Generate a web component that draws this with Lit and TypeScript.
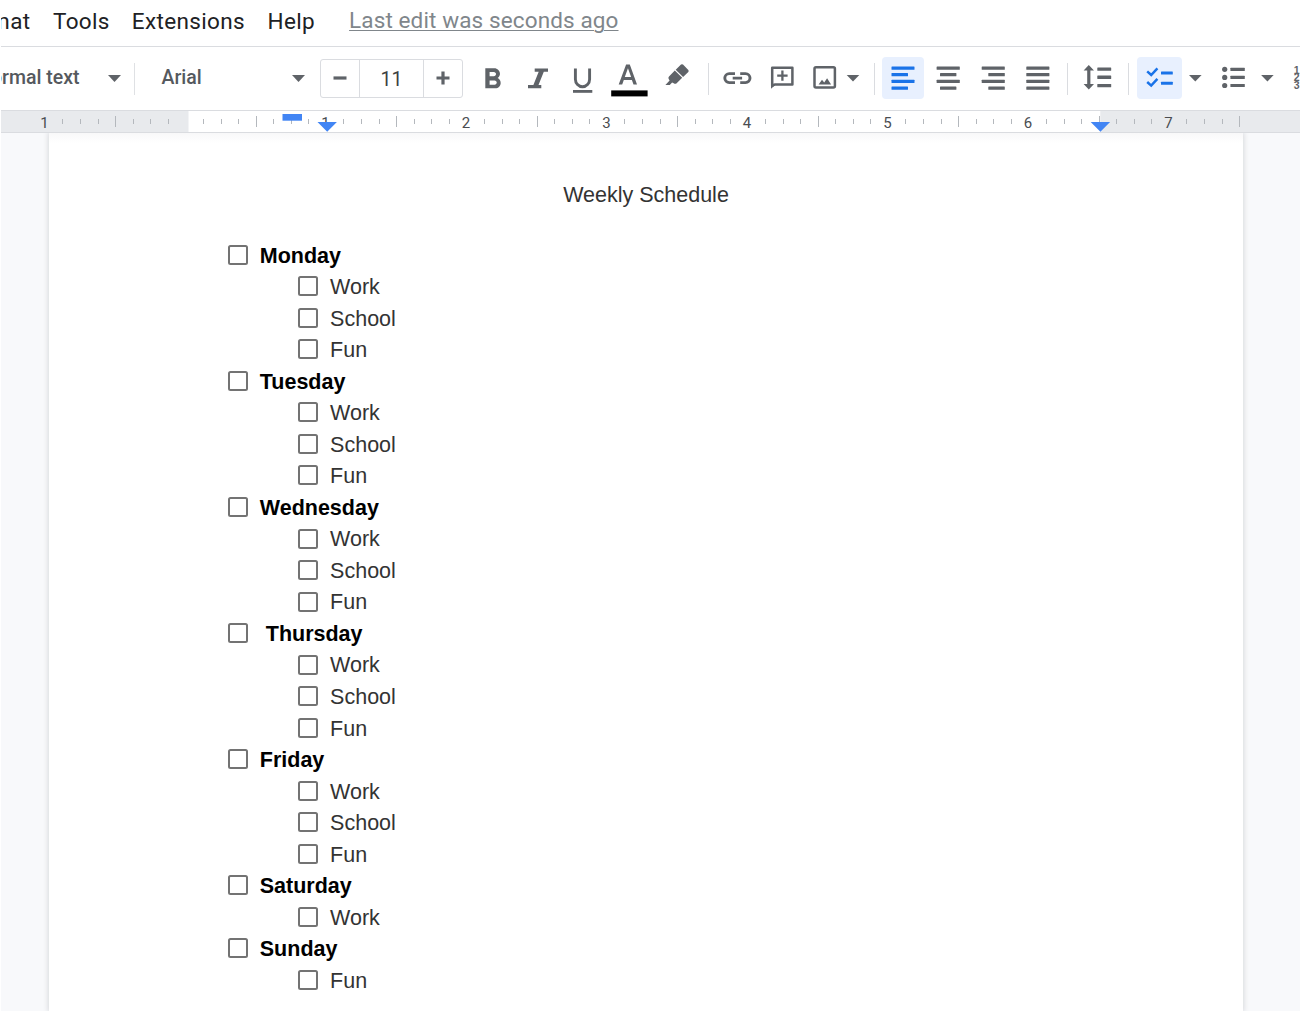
import { LitElement, html, svg, css, type SVGTemplateResult } from "lit";
import { customElement, property } from "lit/decorators.js";

const arrow = (x: number) => svg`<path class="ink" d="M${x - 6.3} 74.9h12.6l-6.3 6.6z"/>`;
const sep = (x: number) => svg`<rect class="sep" x=${x} y="63" width="1" height="32"/>`;
const bar = (x1: number, x2: number, y: number, h = 3.3) =>
  svg`<rect x=${x1} y=${y} width=${x2 - x1} height=${h} rx=".5"/>`;

interface Tool {
  from: number;
  to: number;
  active?: boolean;
  art: SVGTemplateResult;
}

// Each tool covers a horizontal span of the bar; drawings use the bar's own coordinates.
const TOOLS: Tool[] = [
  { from: 463, to: 515, art: svg`<path class="ink" transform="translate(475.3 62.6) scale(1.43)" d="M15.6 10.79c.97-.67 1.65-1.77 1.65-2.79 0-2.26-1.75-4-4-4H7v14h7.04c2.09 0 3.71-1.7 3.71-3.79 0-1.52-.86-2.82-2.15-3.42zM10 6.5h3c.83 0 1.5.67 1.5 1.5s-.67 1.5-1.5 1.5h-3v-3zm3.5 9H10v-3h3.5c.83 0 1.5.67 1.5 1.5s-.67 1.5-1.5 1.5z"/>` },
  { from: 515, to: 560, art: svg`<path class="ink" d="M534.7 68.4H548v3.3h-4.2l-5.3 13.3h2.8v3.3H528V85h5.4l5.3-13.3h-4z"/>` },
  { from: 560, to: 605, art: svg`<path class="line" stroke-width="2.9" d="M575.4 68.4v10.8a7.1 7.6 0 0 0 14.2 0V68.4"/><rect class="ink" x="573" y="90" width="19.3" height="2.8"/>` },
  { from: 605, to: 655, art: svg`<path class="ink" fill-rule="evenodd" d="M626.1 64.6h3.7l7.2 20h-3.5l-1.6-4.6h-8.1l-1.6 4.6h-3.5zM624.8 77h6.3l-3.15-8.8z"/><rect x="611.2" y="90.4" width="36.4" height="6" fill="#000"/>` },
  { from: 655, to: 700, art: svg`<path class="ink" d="M681 64.6q1-.8 2 0l5.3 5.4q.8 1 0 2l-5.2 5-7.4-7.2zM674.8 70.6l7.4 7.2-5.8 5.6q-1.3 1-2.7-.2l-1.6-.6-2.3 2.4h-4.4l4.2-4.4-.9-1.6q-.8-1.6.3-2.6z"/>` },
  { from: 700, to: 715, art: sep(708) },
  { from: 715, to: 760, art: svg`<path class="line" stroke-width="2.9" d="M735 73.6h-5.7a4.5 4.5 0 0 0 0 9h5.7M740.2 73.6h5.3a4.5 4.5 0 0 1 0 9h-5.3M732.7 78.1h9.4"/>` },
  { from: 760, to: 803, art: svg`<path class="line" stroke-width="2.5" stroke-linejoin="round" d="M772.2 85.5V67.8h20.2v16.8h-17.8z"/><path class="ink" d="M771 82v6.8l4-3.6z"/><path class="line" stroke-width="2.3" d="M782.4 70.4v10.4M777.2 75.6h10.4"/>` },
  { from: 803, to: 842, art: svg`<rect class="line" stroke-width="2.5" x="814.5" y="67.2" width="20.4" height="20.4" rx="1.5"/><path class="ink" d="M818.6 84.4l3.4-4.6 2.2 2.6 2.9-4.1 4 6.1z"/>` },
  { from: 842, to: 866, art: arrow(853) },
  { from: 866, to: 882, art: sep(874) },
  { from: 882, to: 924, active: true, art: svg`<g class="on">${bar(891.5, 914.5, 66.5)}${bar(891.5, 908, 73)}${bar(891.5, 914.5, 79.8)}${bar(891.5, 908, 86.4)}</g>` },
  { from: 924, to: 971, art: svg`<g class="ink">${bar(936.6, 959.8, 66.5)}${bar(940, 956.4, 73)}${bar(936.6, 959.8, 79.8)}${bar(940, 956.4, 86.4)}</g>` },
  { from: 971, to: 1016, art: svg`<g class="ink">${bar(981.7, 1004.8, 66.5)}${bar(988.3, 1004.8, 73)}${bar(981.7, 1004.8, 79.8)}${bar(988.3, 1004.8, 86.4)}</g>` },
  { from: 1016, to: 1060, art: svg`<g class="ink">${bar(1026.3, 1049.4, 66.5)}${bar(1026.3, 1049.4, 73)}${bar(1026.3, 1049.4, 79.8)}${bar(1026.3, 1049.4, 86.4)}</g>` },
  { from: 1060, to: 1075, art: sep(1067) },
  { from: 1075, to: 1121, art: svg`<path class="ink" d="M1088.8 65l5.2 5.4h-3.6v13.6h3.6l-5.2 5.4-5.2-5.4h3.6V70.4h-3.6z"/><g class="ink">${bar(1097.3, 1111.2, 67.5)}${bar(1097.3, 1111.2, 75.6)}${bar(1097.3, 1111.2, 83.9)}</g>` },
  { from: 1121, to: 1137, art: sep(1128) },
  { from: 1137, to: 1182, active: true, art: svg`<path class="line blue" stroke-width="2.5" d="M1147.2 71.4l4 3.6 6.2-6.7M1147.2 82l4 3.6 6.2-6.7"/><g class="on">${bar(1161, 1172.8, 71.4, 3)}${bar(1161, 1172.8, 81.8, 3)}</g>` },
  { from: 1182, to: 1210, art: arrow(1195.3) },
  { from: 1210, to: 1252, art: svg`<g class="ink"><circle cx="1224.7" cy="69.3" r="2.6"/><circle cx="1224.7" cy="77.4" r="2.6"/><circle cx="1224.7" cy="85.5" r="2.6"/>${bar(1230.4, 1244.8, 67.8, 3.2)}${bar(1230.4, 1244.8, 75.8, 3.2)}${bar(1230.4, 1244.8, 83.9, 3.2)}</g>` },
  { from: 1252, to: 1284, art: arrow(1267.4) },
  { from: 1284, to: 1300, art: svg`<g class="digits"><text x="1293.8" y="73.5">1</text><text x="1293.8" y="81.2">2</text><text x="1293.8" y="89">3</text></g>` },
];

@customElement("doc-toolbar")
class DocToolbar extends LitElement {
  static styles = css`
    :host { display: flex; height: 63px; margin: 0 1px; overflow: hidden; border-bottom: 1px solid #dadce0; font: 500 19.5px Roboto, sans-serif; color: #55595e; }
    .select { display: flex; align-items: center; justify-content: space-between; flex: none; box-sizing: border-box; height: 60px; }
    .style { width: 133px; padding-right: 13.5px; }
    .label { display: flex; justify-content: flex-end; width: 78.5px; overflow: hidden; white-space: nowrap; }
    .label, .face { padding-bottom: 0; }
    .divider { width: 1px; height: 32px; margin-top: 16px; background: #dfe1e4; flex: none; }
    .font { width: 184px; padding: 0 14px 0 26.5px; }
    .tri { width: 13px; height: 7px; fill: #5f6368; margin-top: 2px; }
    .size { display: flex; box-sizing: border-box; width: 143px; height: 39px; margin-top: 12px; margin-left: 1px; border: 1px solid #dadce0; border-radius: 3px; flex: none; }
    .size > * { display: flex; align-items: center; justify-content: center; }
    .step { width: 38px; }
    .value { flex: 1; border: solid #dadce0; border-width: 0 1px; font-weight: 400; font-size: 19.5px; color: #3c4043; padding-top: 1px; }
    .step svg { width: 16px; height: 16px; stroke: #5f6368; stroke-width: 3.2; margin-bottom: 1px; }
    .tool { display: block; height: 42px; margin-top: 10px; flex: none; }
    .active { background: #e8f0fe; border-radius: 4px; }
    .ink { fill: #5f6368; }
    .on { fill: #1a73e8; }
    .sep { fill: #dadce0; }
    .line { fill: none; stroke: #5f6368; }
    .blue { stroke: #1a73e8; }
    .digits { font: 700 10.5px "Liberation Sans", sans-serif; fill: #5f6368; }
  `;
  render() {
    const tri = html`<svg class="tri" viewBox="0 0 13 7"><path d="M0 0h13L6.5 7z" /></svg>`;
    return html`
      <div class="select style"><span class="label"><span>Normal text</span></span>${tri}</div>
      <div class="divider"></div>
      <div class="select font"><span class="face">Arial</span>${tri}</div>
      <div class="size">
        <span class="step"><svg viewBox="0 0 16 16"><path d="M1.5 8h13" /></svg></span>
        <span class="value">11</span>
        <span class="step"><svg viewBox="0 0 16 16"><path d="M1.5 8h13M8 1.5v13" /></svg></span>
      </div>
      ${TOOLS.map((t) => html`<svg class="tool ${t.active ? "active" : ""}" width=${t.to - t.from} height="42" viewBox="${t.from} 57 ${t.to - t.from} 42">${t.art}</svg>`)}
    `;
  }
}

@customElement("doc-ruler")
class DocRuler extends LitElement {
  static styles = css`
    :host { display: block; height: 22px; margin: 0 1px; border-bottom: 1px solid #dadce0; box-sizing: border-box; background: #fff; }
    svg { display: block; }
    .pad { fill: #e8eaed; }
    .tick { fill: #b4b8bd; }
    .num { font: 400 15px Roboto, sans-serif; fill: #4a4d51; text-anchor: middle; }
    .mark { fill: #4285f4; }
  `;
  render() {
    const zero = 185.4, inch = 140.5;
    const ticks: SVGTemplateResult[] = [];
    for (let i = -7; i <= 60; i++) {
      if (i % 8 === 0) continue;
      const x = Math.round(zero + (i * inch) / 8);
      ticks.push(i % 4 === 0
        ? svg`<rect class="tick" x=${x} y="116" width="1" height="11"/>`
        : svg`<rect class="tick" x=${x} y="119" width="1" height="5"/>`);
    }
    const nums = [-1, 1, 2, 3, 4, 5, 6, 7];
    return html`<svg width="1299" height="21" viewBox="1 111 1299 21">
      <rect class="pad" x="1" y="111" width="187.5" height="21" />
      <rect class="pad" x="1100.3" y="111" width="200" height="21" />
      ${ticks}
      ${nums.map((n) => svg`<text class="num" x=${zero + n * inch - 0.4} y="127.7">${Math.abs(n)}</text>`)}
      <rect class="mark" x="282.5" y="114" width="19.5" height="6.7" />
      <path class="mark" d="M317.5 122h19.4l-9.7 9.8zM1090.7 122h19.4l-9.7 9.8z" />
    </svg>`;
  }
}

@customElement("check-item")
class CheckItem extends LitElement {
  @property() label = "";
  @property({ type: Boolean }) nested = false;
  static styles = css`
    :host { display: flex; align-items: center; height: 31.54px; font-size: 21.5px; color: #333; }
    .box { box-sizing: border-box; width: 20px; height: 20px; border: 2px solid #737373; border-radius: 2.5px; margin: 0 12.2px 0 0; flex: none; }
    .text { white-space: pre; line-height: 30px; padding-top: 1.6px; }
    :host([nested]) { padding-left: 70.3px; }
    :host(:not([nested])) { font-weight: 700; color: #000; }
  `;
  render() {
    return html`<span class="box"></span><span class="text">${this.label}</span>`;
  }
}

const WEEK: [string, string[]][] = [
  ["Monday", ["Work", "School", "Fun"]],
  ["Tuesday", ["Work", "School", "Fun"]],
  ["Wednesday", ["Work", "School", "Fun"]],
  [" Thursday", ["Work", "School", "Fun"]],
  ["Friday", ["Work", "School", "Fun"]],
  ["Saturday", ["Work"]],
  ["Sunday", ["Fun"]],
];

@customElement("app-root")
class AppRoot extends LitElement {
  static styles = css`
    :host { display: flex; flex-direction: column; width: 1301px; height: 1011px; overflow: hidden; background: #fff; font-family: "Liberation Sans", Arial, sans-serif; }
    .menu { display: flex; align-items: center; box-sizing: border-box; height: 47px; padding-bottom: 4px; margin: 0 1px; border-bottom: 1px solid #dadce0; font: 400 22.5px Roboto, sans-serif; color: #202124; flex: none; overflow: hidden; white-space: nowrap; letter-spacing: .35px; }
    .clip { width: 29.5px; display: flex; justify-content: flex-end; overflow: hidden; }
    .tools { margin-left: 22.5px; }
    .ext { margin-left: 22px; }
    .help { margin-left: 22.6px; }
    .edit { margin-left: 34px; padding-bottom: 2px; color: #80868b; letter-spacing: .12px; text-decoration: underline; text-decoration-thickness: 1px; text-underline-offset: 2px; }
    doc-toolbar, doc-ruler { flex: none; }
    .canvas { flex: 1; display: flex; min-height: 0; margin: 0 1px; padding: 0 57px 0 48px; background: #f8f9fb; overflow: hidden; }
    .page { flex: 1; box-sizing: border-box; background: linear-gradient(#f8f8f9, #fff 10px); box-shadow: 0 0 5px 1px #d8dadd; padding: 47px 0 0 178.6px; }
    .title { margin: 0 178.6px 29px 0; padding-top: 1px; text-align: center; font-size: 21.5px; line-height: 29px; color: #333; font-weight: 400; }
  `;
  render() {
    return html`
      <nav class="menu">
        <span class="clip"><span>Format</span></span>
        <span class="tools">Tools</span>
        <span class="ext">Extensions</span>
        <span class="help">Help</span>
        <span class="edit">Last edit was seconds ago</span>
      </nav>
      <doc-toolbar></doc-toolbar>
      <doc-ruler></doc-ruler>
      <div class="canvas">
        <main class="page">
          <h1 class="title">Weekly Schedule</h1>
          ${WEEK.map(([day, tasks]) => html`
            <check-item label=${day}></check-item>
            ${tasks.map((t) => html`<check-item nested label=${t}></check-item>`)}
          `)}
        </main>
      </div>
    `;
  }
}
